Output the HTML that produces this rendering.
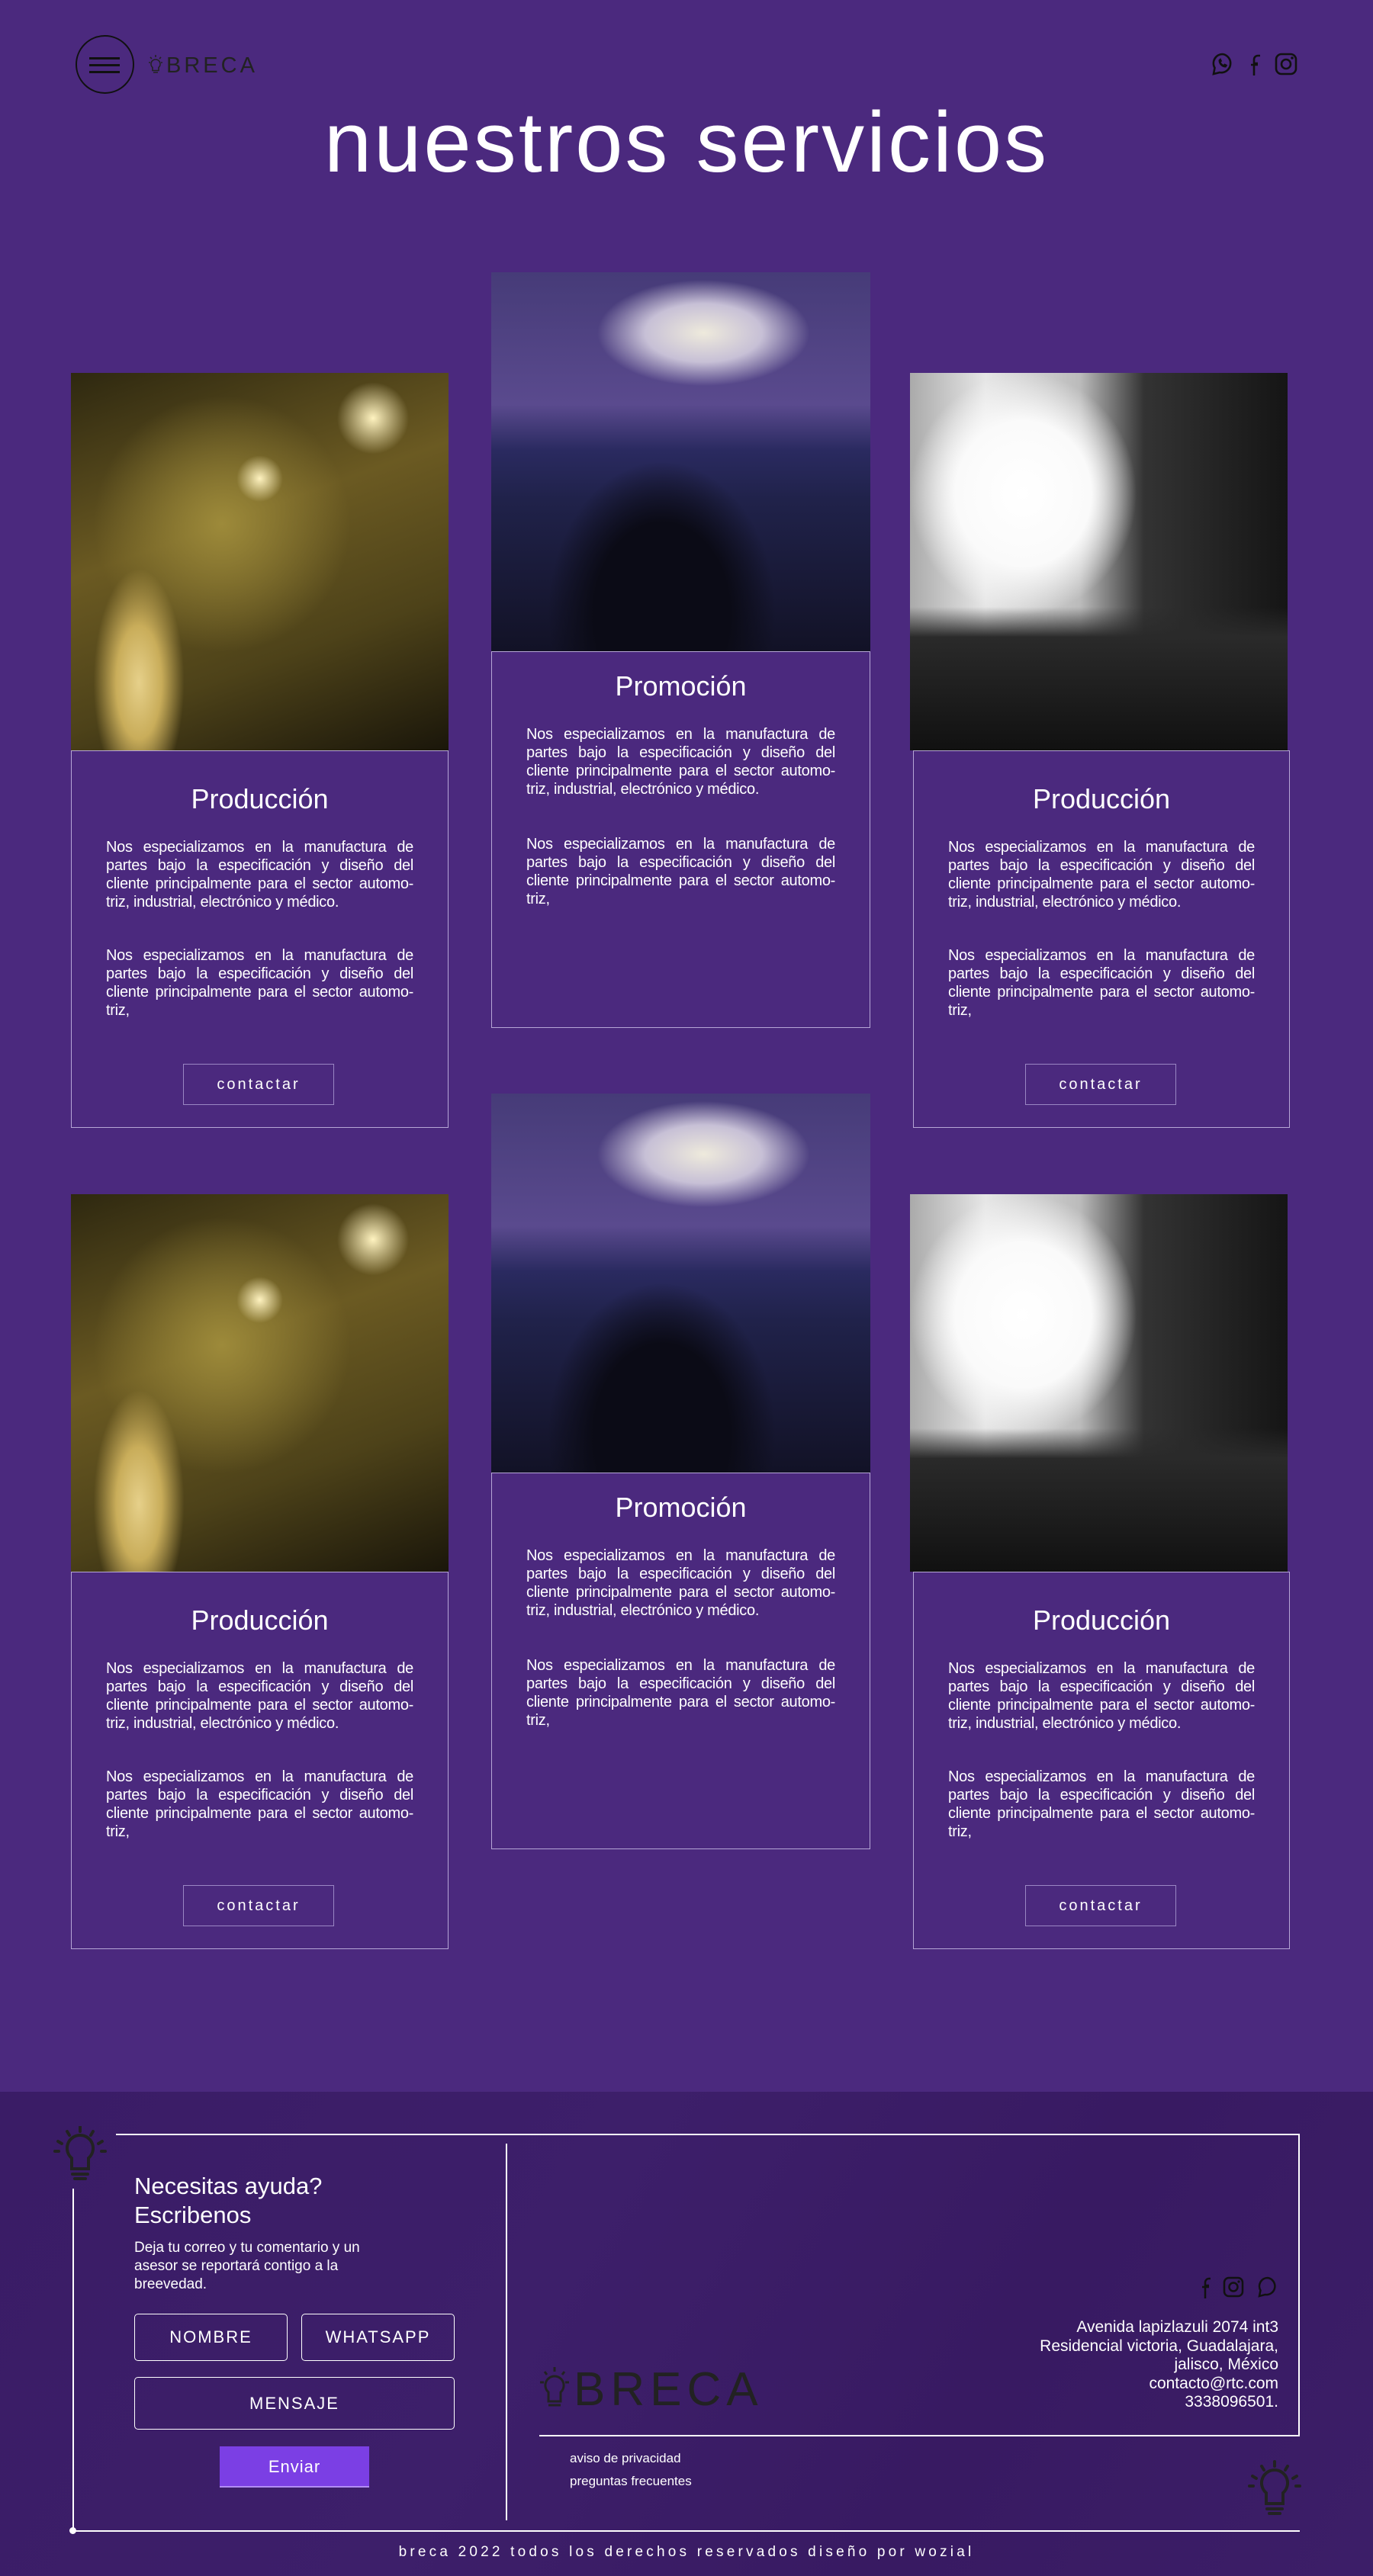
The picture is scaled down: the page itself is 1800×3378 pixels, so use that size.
<!DOCTYPE html>
<html><head><meta charset="utf-8">
<style>
*{margin:0;padding:0;box-sizing:border-box}
body{width:1800px;height:3378px;background:#4b297e;font-family:"Liberation Sans Narrow","Liberation Sans",sans-serif;color:#fff;position:relative;overflow:hidden}
.a{position:absolute}
.img{position:absolute;overflow:hidden}
.card{position:absolute;border:1.5px solid #b6a6d6}
.card h3{position:absolute;left:0;right:0;text-align:center;font-weight:400;font-size:36px}
.card p{position:absolute;left:45px;right:45px;font-size:20px;line-height:24px;text-align:justify;font-weight:300;letter-spacing:-0.3px}
.btn{position:absolute;left:146px;width:198px;height:54px;border:1.5px solid #9a86c4;font-size:20px;letter-spacing:3px;text-align:center;line-height:52px}
.fbox{position:absolute;border:1.5px solid #fff;border-radius:5px;font-size:22px;letter-spacing:2px;text-align:center}
.i1{background:radial-gradient(ellipse 12% 30% at 18% 82%,#e6d08a 0,#c9ad5a 50%,transparent 100%),radial-gradient(circle at 80% 12%,#fff3c0 0,transparent 8%),radial-gradient(circle at 50% 28%,#fff3c0 0,transparent 7%),radial-gradient(circle at 40% 40%,#9d8a3a 0,transparent 40%),linear-gradient(160deg,#2e2810 0%,#6b5a22 40%,#4d4219 70%,#1a160a 100%)}
.i2{background:radial-gradient(ellipse 28% 14% at 56% 16%,#eeeadc 0,#c7c0d6 55%,transparent 100%),radial-gradient(ellipse 30% 40% at 45% 90%,#0b0b16 0,#0b0b16 60%,transparent 100%),linear-gradient(180deg,#463b78 0%,#5a4a8e 35%,#2a2a60 47%,#20224a 60%,#121226 100%)}
.i3{background:radial-gradient(ellipse 30% 32% at 30% 32%,#fff 0,#fafafa 60%,transparent 100%),linear-gradient(180deg,transparent 0%,transparent 62%,#2a2a2a 70%,#111 100%),linear-gradient(90deg,#aaa 0%,#e6e6e6 20%,#bbb 45%,#333 62%,#151515 100%)}
</style></head><body>

<div class="a" style="left:99px;top:46px;width:77px;height:77px;border:2px solid #111;border-radius:50%"></div>
<div class="a" style="left:117px;top:75px;width:40px;height:3px;background:#111"></div>
<div class="a" style="left:117px;top:84px;width:40px;height:3px;background:#111"></div>
<div class="a" style="left:117px;top:93px;width:40px;height:3px;background:#111"></div>
<svg class="a" style="left:193px;top:70px" width="22" height="30" viewBox="0 0 22 30"><g fill="none" stroke="#222" stroke-width="1.6"><path d="M11 8a6 6 0 0 0-4 10.5v4h8v-4A6 6 0 0 0 11 8z"/><path d="M8 25h6M11 2v3M4 5l2 2M18 5l-2 2M2 12h2M18 12h2"/></g></svg>
<div class="a" style="left:218px;top:70px;font-size:29px;letter-spacing:4px;color:#222;font-weight:300">BRECA</div>
<svg class="a" style="left:1588px;top:68px" width="115" height="32" viewBox="0 0 115 32"><g fill="none" stroke="#111" stroke-width="2.6"><path d="M15 3a12 12 0 0 0-10.5 18L3 29l8-2A12 12 0 1 0 15 3z"/><path d="M10 11c0 5 4 9 9 9l1.5-2.5-3-1.5-1.5 1.5c-2-1-3-2-4-4l1.5-1.5-1.5-3z" fill="#111" stroke-width="1"/><path d="M56 31V15h5M52 17h9M56 31V10a5 5 0 0 1 5-5h3"/><rect x="85" y="3" width="26" height="26" rx="7"/><circle cx="98" cy="16" r="6"/></g><circle cx="106" cy="8" r="1.8" fill="#111"/></svg>

<div class="a" style="left:0;width:1800px;top:122px;text-align:center;font-size:112px;font-weight:300;letter-spacing:3px">nuestros servicios</div>

<div class="img i1" style="left:93px;top:489px;width:495px;height:495px"></div>
<div class="card" style="left:93px;top:984px;width:495px;height:495px">
<h3 style="top:42px">Producción</h3>
<p style="top:114px">Nos especializamos en la manufactura de partes bajo la especificación y diseño del cliente principalmente para el sector automo-triz, industrial, electrónico y médico.</p>
<p style="top:256px">Nos especializamos en la manufactura de partes bajo la especificación y diseño del cliente principalmente para el sector automo-triz,</p>
<div class="btn" style="top:410px">contactar</div></div>

<div class="img i2" style="left:644px;top:357px;width:497px;height:497px"></div>
<div class="card" style="left:644px;top:854px;width:497px;height:494px">
<h3 style="top:24px">Promoción</h3>
<p style="top:96px">Nos especializamos en la manufactura de partes bajo la especificación y diseño del cliente principalmente para el sector automo-triz, industrial, electrónico y médico.</p>
<p style="top:240px">Nos especializamos en la manufactura de partes bajo la especificación y diseño del cliente principalmente para el sector automo-triz,</p></div>

<div class="img i3" style="left:1193px;top:489px;width:495px;height:495px"></div>
<div class="card" style="left:1197px;top:984px;width:494px;height:495px">
<h3 style="top:42px">Producción</h3>
<p style="top:114px">Nos especializamos en la manufactura de partes bajo la especificación y diseño del cliente principalmente para el sector automo-triz, industrial, electrónico y médico.</p>
<p style="top:256px">Nos especializamos en la manufactura de partes bajo la especificación y diseño del cliente principalmente para el sector automo-triz,</p>
<div class="btn" style="top:410px">contactar</div></div>

<div class="img i1" style="left:93px;top:1566px;width:495px;height:495px"></div>
<div class="card" style="left:93px;top:2061px;width:495px;height:495px">
<h3 style="top:42px">Producción</h3>
<p style="top:114px">Nos especializamos en la manufactura de partes bajo la especificación y diseño del cliente principalmente para el sector automo-triz, industrial, electrónico y médico.</p>
<p style="top:256px">Nos especializamos en la manufactura de partes bajo la especificación y diseño del cliente principalmente para el sector automo-triz,</p>
<div class="btn" style="top:410px">contactar</div></div>

<div class="img i2" style="left:644px;top:1434px;width:497px;height:497px"></div>
<div class="card" style="left:644px;top:1931px;width:497px;height:494px">
<h3 style="top:24px">Promoción</h3>
<p style="top:96px">Nos especializamos en la manufactura de partes bajo la especificación y diseño del cliente principalmente para el sector automo-triz, industrial, electrónico y médico.</p>
<p style="top:240px">Nos especializamos en la manufactura de partes bajo la especificación y diseño del cliente principalmente para el sector automo-triz,</p></div>

<div class="img i3" style="left:1193px;top:1566px;width:495px;height:495px"></div>
<div class="card" style="left:1197px;top:2061px;width:494px;height:495px">
<h3 style="top:42px">Producción</h3>
<p style="top:114px">Nos especializamos en la manufactura de partes bajo la especificación y diseño del cliente principalmente para el sector automo-triz, industrial, electrónico y médico.</p>
<p style="top:256px">Nos especializamos en la manufactura de partes bajo la especificación y diseño del cliente principalmente para el sector automo-triz,</p>
<div class="btn" style="top:410px">contactar</div></div>

<div class="a" style="left:0;top:2743px;width:1800px;height:635px;background:linear-gradient(120deg,#3a1c66 0%,#3d1f6a 40%,#381a62 70%,#3c1e68 100%)"></div>
<svg class="a" style="left:70px;top:2788px" width="70" height="72" viewBox="0 0 70 72"><g fill="none" stroke="#222" stroke-width="4" stroke-linecap="round"><path d="M35 12a17 17 0 0 0-11 30v14h22V42a17 17 0 0 0-11-30z"/><path d="M25 63h20M28 69h14M35 1v6M18 7l3 5M52 7l-3 5M6 20l5 3M64 20l-5 3M2 33h5M63 33h5"/></g></svg>
<div class="a" style="left:152px;top:2798px;width:1551px;height:2px;background:#fff"></div>
<div class="a" style="left:1702px;top:2798px;width:1.5px;height:397px;background:#fff"></div>
<div class="a" style="left:707px;top:3193px;width:996px;height:1.5px;background:#fff"></div>
<div class="a" style="left:663px;top:2811px;width:1.5px;height:494px;background:#fff"></div>
<div class="a" style="left:95px;top:2870px;width:1.5px;height:448px;background:#fff"></div>
<div class="a" style="left:95px;top:3318px;width:1609px;height:2px;background:#fff"></div>
<div class="a" style="left:91px;top:3314px;width:9px;height:9px;border-radius:50%;background:#fff"></div>

<div class="a" style="left:176px;top:2848px;font-size:31px;line-height:38px;font-weight:300">Necesitas ayuda?<br>Escribenos</div>
<div class="a" style="left:176px;top:2936px;width:330px;font-size:19px;line-height:24px;font-weight:300">Deja tu correo y tu comentario y un asesor se reportará contigo a la breevedad.</div>
<div class="fbox" style="left:176px;top:3034px;width:201px;height:62px;line-height:60px">NOMBRE</div>
<div class="fbox" style="left:395px;top:3034px;width:201px;height:62px;line-height:60px">WHATSAPP</div>
<div class="fbox" style="left:176px;top:3117px;width:420px;height:69px;line-height:67px">MENSAJE</div>
<div class="a" style="left:288px;top:3208px;width:196px;height:54px;background:#7b3fe4;border-bottom:2px solid #b28cf5;text-align:center;line-height:54px;font-size:22px;letter-spacing:1px">Enviar</div>

<svg class="a" style="left:706px;top:3102px" width="42" height="58" viewBox="0 0 42 58"><g fill="none" stroke="#222" stroke-width="3"><path d="M21 14a12 12 0 0 0-8 21v12h16V35a12 12 0 0 0-8-21z"/><path d="M13 52h16M21 2v6M8 8l3 4M34 8l-3 4M2 22h5M35 22h5"/></g></svg>
<div class="a" style="left:752px;top:3098px;font-size:62px;letter-spacing:7px;color:#222;font-weight:300">BRECA</div>

<svg class="a" style="left:1570px;top:2984px" width="108" height="30" viewBox="0 0 108 30"><g fill="none" stroke="#111" stroke-width="2.5"><path d="M10 30V13h5M6 15h9M10 30V9a5 5 0 0 1 5-5h2"/><rect x="35" y="3" width="24" height="24" rx="6"/><circle cx="47" cy="15" r="5.5"/><path d="M92 3a11 11 0 0 0-9.5 16.5L81 27l7.5-2A11 11 0 1 0 92 3z"/></g><circle cx="54" cy="8" r="1.6" fill="#111"/></svg>
<div class="a" style="left:1300px;top:3040px;width:376px;text-align:right;font-size:21px;line-height:24.5px;font-weight:300">Avenida lapizlazuli 2074 int3<br>Residencial victoria, Guadalajara,<br>jalisco, México<br>contacto@rtc.com<br>3338096501.</div>
<div class="a" style="left:747px;top:3209px;font-size:17px;line-height:30px;font-weight:300">aviso de privacidad<br>preguntas frecuentes</div>
<svg class="a" style="left:1636px;top:3226px" width="70" height="74" viewBox="0 0 70 72"><g fill="none" stroke="#222" stroke-width="4" stroke-linecap="round"><path d="M35 12a17 17 0 0 0-11 30v14h22V42a17 17 0 0 0-11-30z"/><path d="M25 63h20M28 69h14M35 1v6M18 7l3 5M52 7l-3 5M6 20l5 3M64 20l-5 3M2 33h5M63 33h5"/></g></svg>
<div class="a" style="left:0;width:1800px;top:3336px;text-align:center;font-size:19px;letter-spacing:4.2px;font-weight:300">breca 2022 todos los derechos reservados diseño por wozial</div>
</body></html>
